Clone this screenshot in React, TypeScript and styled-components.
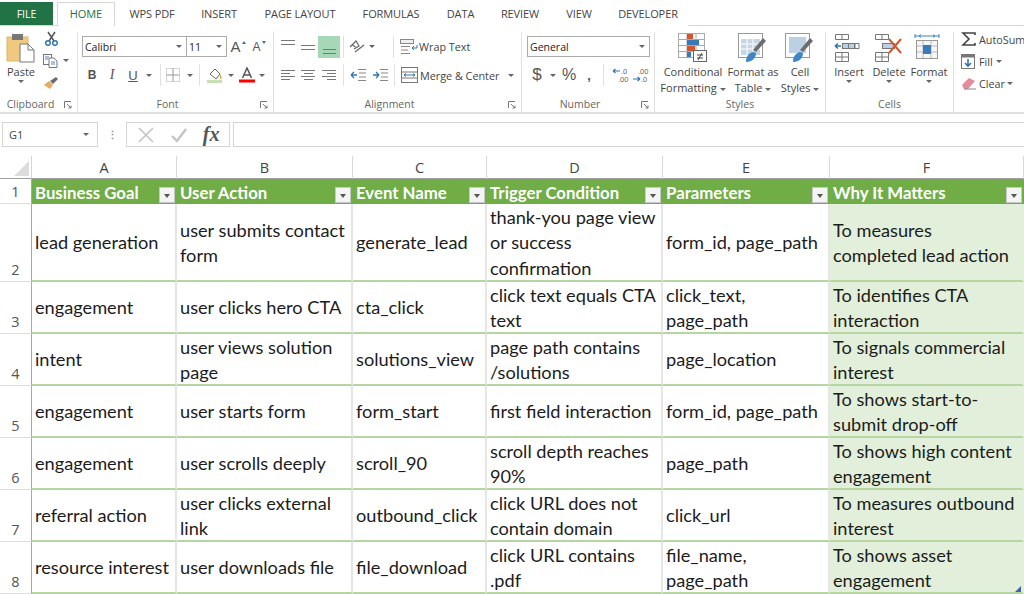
import React from "react";
import styled, { createGlobalStyle } from "styled-components";

const GlobalStyle = createGlobalStyle`
  html, body { margin: 0; padding: 0; background: #fff; }
  body { width: 1024px; height: 594px; overflow: hidden; font-family: "Open Sans", "Liberation Sans", sans-serif; }
`;

const Page = styled.div`
  width: 1024px;
  height: 594px;
  overflow: hidden;
  display: flex;
  flex-direction: column;
`;

/* tabs */
const TabBar = styled.div`
  height: 26px;
  box-sizing: border-box;
  padding-top: 2px;
  display: flex;
  align-items: flex-start;
  border-bottom: 1px solid #d6d6d6;
`;
const FileTab = styled.div`
  width: 53px;
  height: 23px;
  margin-right: 4px;
  background: #217346;
  color: #fff;
  font-size: 10.5px;
  display: flex;
  align-items: center;
  justify-content: center;
`;
const Tab = styled.div<{ $w: number; $active?: boolean }>`
  width: ${(p) => p.$w}px;
  box-sizing: border-box;
  font-size: 11px;
  letter-spacing: -0.1px;
  display: flex;
  align-items: center;
  justify-content: center;
  color: ${(p) => (p.$active ? "#217346" : "#444")};
  background: #fff;
  height: 24px;
  padding-bottom: 2px;
  border: 1px solid ${(p) => (p.$active ? "#d6d6d6" : "transparent")};
  border-bottom: none;
`;

/* ribbon */
const Ribbon = styled.div`
  height: 88px;
  box-sizing: border-box;
  display: flex;
  border-bottom: 2px solid #e1e1e1;
  padding-top: 6px;
`;
const Group = styled.div<{ $w: number }>`
  width: ${(p) => p.$w}px;
  flex: none;
  box-sizing: border-box;
  height: 80px;
  border-right: 1px solid #e1e1e1;
  display: flex;
  flex-direction: column;
`;
const GroupBody = styled.div`
  flex: 1;
  display: flex;
  min-height: 0;
`;
const GroupLabel = styled.div<{ $launcher?: boolean }>`
  height: 15px;
  position: relative;
  font-size: 10.5px;
  color: #666;
  text-align: center;
  line-height: 14px;
  padding-right: ${(p) => (p.$launcher ? 16 : 0)}px;
`;
const Launcher = styled.svg`
  position: absolute;
  right: 5px;
  top: 4px;
`;
const Stack = styled.div<{ $w?: number; $pad?: number; $top?: number }>`
  display: flex;
  flex-direction: column;
  ${(p) => (p.$w ? `width: ${p.$w}px;` : "")}
  ${(p) => (p.$pad ? `padding-left: ${p.$pad}px;` : "")}
  ${(p) => (p.$top ? `margin-top: ${p.$top}px;` : "")}
`;
const ToolRow = styled.div<{ $h?: number; $gap?: number }>`
  display: flex;
  align-items: center;
  height: ${(p) => p.$h ?? 28}px;
  gap: ${(p) => p.$gap ?? 0}px;
`;
const BigTool = styled.div<{ $w: number }>`
  width: ${(p) => p.$w}px;
  flex: none;
  display: flex;
  flex-direction: column;
  align-items: center;
  font-size: 11px;
  line-height: 16px;
  color: #444;
  white-space: nowrap;
  svg.big { height: 30px; margin: 1px 0; }
`;
const SmallIcon = styled.div<{ $w: number; $on?: boolean }>`
  width: ${(p) => p.$w}px;
  height: 22px;
  flex: none;
  display: flex;
  align-items: center;
  justify-content: center;
  background: ${(p) => (p.$on ? "#a6d8b8" : "transparent")};
`;
const Caret = styled.span<{ $ml?: number; $mr?: number }>`
  display: inline-block;
  flex: none;
  width: 0;
  height: 0;
  border-left: 3px solid transparent;
  border-right: 3px solid transparent;
  border-top: 3px solid #666;
  margin-left: ${(p) => p.$ml ?? 0}px;
  margin-right: ${(p) => p.$mr ?? 0}px;
  vertical-align: middle;
`;
const GrowMark = styled.span<{ $down?: boolean }>`
  display: inline-block;
  width: 0;
  height: 0;
  margin: -8px 0 0 1px;
  border-left: 2.5px solid transparent;
  border-right: 2.5px solid transparent;
  ${(p) => (p.$down ? "border-top: 3px solid #2f75b5;" : "border-bottom: 3px solid #2f75b5;")}
`;
const VSep = styled.div<{ $ml?: number; $mr?: number }>`
  width: 1px;
  height: 22px;
  background: #e1e1e1;
  flex: none;
  margin-left: ${(p) => p.$ml ?? 0}px;
  margin-right: ${(p) => p.$mr ?? 0}px;
`;
const Combo = styled.div<{ $w: number; $ml?: number }>`
  width: ${(p) => p.$w}px;
  margin-left: ${(p) => p.$ml ?? 0}px;
  height: 21px;
  box-sizing: border-box;
  border: 1px solid #ababab;
  display: flex;
  align-items: center;
  justify-content: space-between;
  padding: 0 4px 0 2px;
  font-size: 10.5px;
  color: #222;
  background: #fff;
`;
const ToolText = styled.span`
  font-size: 10.8px;
  color: #444;
  white-space: nowrap;
`;
const Glyph = styled.span<{ $size?: number; $serif?: boolean; $bold?: boolean; $italic?: boolean; $u?: boolean }>`
  font-family: ${(p) => (p.$serif ? '"Liberation Serif", serif' : '"Liberation Sans", sans-serif')};
  font-size: ${(p) => p.$size ?? 12}px;
  font-weight: ${(p) => (p.$bold ? 700 : 400)};
  font-style: ${(p) => (p.$italic ? "italic" : "normal")};
  text-decoration: ${(p) => (p.$u ? "underline" : "none")};
  color: #555;
`;

/* formula bar */
const FormulaBar = styled.div`
  height: 26px;
  margin-top: 8px;
  display: flex;
  align-items: stretch;
`;
const NameBox = styled.div`
  width: 96px;
  margin-left: 2px;
  box-sizing: border-box;
  border: 1px solid #d4d4d4;
  display: flex;
  align-items: center;
  justify-content: space-between;
  padding: 0 8px 0 6px;
  font-size: 11px;
  color: #444;
`;
const Grip = styled.div`
  width: 28px;
  display: flex;
  align-items: center;
  justify-content: center;
  color: #999;
  font-size: 11px;
  font-weight: 700;
`;
const FxBox = styled.div`
  width: 104px;
  box-sizing: border-box;
  border: 1px solid #d4d4d4;
  display: flex;
  align-items: center;
  justify-content: space-around;
  padding: 0 2px;
`;
const FormulaInput = styled.div`
  flex: 1;
  margin-left: 3px;
  box-sizing: border-box;
  border: 1px solid #d4d4d4;
  border-right: none;
`;

/* sheet */
const Sheet = styled.div`
  margin-top: 9px;
  display: grid;
  grid-template-columns: 32px 145px 176px 134px 176px 167px 194px;
  grid-template-rows: 23px 25px 78px repeat(6, 52px);
  font-family: Lato, Carlito, "Liberation Sans", sans-serif;
`;
const Corner = styled.div`
  border-right: 1px solid #d4d4d4;
  border-bottom: 1px solid #9f9f9f;
  position: relative;
  &::after {
    content: "";
    position: absolute;
    right: 2px;
    bottom: 2px;
    width: 0;
    height: 0;
    border-left: 15px solid transparent;
    border-bottom: 15px solid #dcdcdc;
  }
`;
const ColHead = styled.div`
  border-right: 1px solid #d9d9d9;
  border-bottom: 1px solid #9f9f9f;
  display: flex;
  align-items: center;
  justify-content: center;
  font-family: "Open Sans", sans-serif;
  font-size: 14.5px;
  color: #444;
`;
const RowHead = styled.div`
  border-right: 1px solid #a8a8a8;
  border-bottom: 1px solid #dedede;
  display: flex;
  align-items: flex-end;
  justify-content: center;
  padding-bottom: 2px;
  box-sizing: border-box;
  font-family: "Open Sans", sans-serif;
  font-size: 14.5px;
  line-height: 19px;
  color: #555;
`;
const HeadCell = styled.div`
  background: #70ad47;
  color: #fff;
  font-weight: 700;
  font-size: 16.8px;
  padding: 1px 0 0 3px;
  display: flex;
  align-items: center;
  justify-content: space-between;
  white-space: nowrap;
  overflow: hidden;
`;
const FilterButton = styled.div`
  width: 16px;
  height: 16px;
  flex: none;
  margin: 5px 2px 0 0;
  background: #f4f4f4;
  border: 1px solid #c8c8c8;
  box-sizing: border-box;
  display: flex;
  align-items: center;
  justify-content: center;
  &::after {
    content: "";
    border-left: 3.5px solid transparent;
    border-right: 3.5px solid transparent;
    border-top: 4px solid #555;
    margin-top: 2px;
  }
`;
const Cell = styled.div<{ $accent?: boolean }>`
  box-sizing: border-box;
  padding: 2px 3px 0;
  font-size: 18.2px;
  line-height: 25.5px;
  color: #1c1c1c;
  display: flex;
  align-items: center;
  border-right: 2px solid ${(p) => (p.$accent ? "transparent" : "#e6e6e6")};
  border-bottom: 2px solid #b5d6a0;
  background: ${(p) => (p.$accent ? "#e2efda" : "#fff")};
  position: relative;
  white-space: pre;
  overflow: hidden;
`;
const ResizeHandle = styled.div`
  position: absolute;
  right: 1px;
  bottom: 0;
  width: 0;
  height: 0;
  border-left: 6px solid transparent;
  border-bottom: 6px solid #3f5fa8;
`;

/* drawn icons */
const LauncherIcon = () => (
  <Launcher width="8" height="8" viewBox="0 0 8 8">
    <path d="M.5 7V.5H7M3 3l4 4M4.5 7H7V4.5" fill="none" stroke="#777" />
  </Launcher>
);
const PasteIcon = () => (
  <svg className="big" width="30" height="30" viewBox="0 0 30 30">
    <rect x="1" y="4" width="21" height="24" fill="#f0c981" stroke="#e0b568" />
    <rect x="6" y="1" width="11" height="6" fill="#777" />
    <path d="M14 11h8l6 6v12H14z" fill="#fff" stroke="#777" />
    <path d="M22 11v6h6" fill="none" stroke="#777" />
  </svg>
);
const Scissors = () => (
  <svg width="15" height="15" viewBox="0 0 15 15">
    <path d="M4 1l6 9M11 1L5 10" stroke="#555" strokeWidth="1.5" />
    <circle cx="4" cy="12" r="2.3" fill="none" stroke="#2f75b5" strokeWidth="1.5" />
    <circle cx="11" cy="12" r="2.3" fill="none" stroke="#2f75b5" strokeWidth="1.5" />
  </svg>
);
const CopyIcon = () => (
  <svg width="15" height="14" viewBox="0 0 15 14">
    <rect x=".5" y=".5" width="8" height="10" fill="#fff" stroke="#777" />
    <path d="M6 4h5l3 3v6.5H6z" fill="#fff" stroke="#777" />
    <path d="M2 3h4M2 5h3M8 8h4M8 10h4" stroke="#4a86c8" />
  </svg>
);
const PainterIcon = () => (
  <svg width="16" height="14" viewBox="0 0 16 14">
    <path d="M1 9l5-4 4 4-3 4z" fill="#e3ad5a" />
    <path d="M7 5l6-4 2 2-5 5z" fill="#6a6a6a" />
  </svg>
);
const Lines = ({ rows, w = 15 }: { rows: [number, number, number][]; w?: number }) => (
  <svg width={w} height="14" viewBox={`0 0 ${w} 14`}>
    {rows.map(([x, y, len], i) => (
      <rect key={i} x={x} y={y} width={len} height="1" fill="#777" />
    ))}
  </svg>
);
const BordersIcon = () => (
  <svg width="14" height="14" viewBox="0 0 14 14">
    <path d="M.5.5h13v13H.5z" fill="none" stroke="#aaa" strokeDasharray="1 1" />
    <path d="M.5 7h13M7 .5v13" stroke="#999" />
  </svg>
);
const FillIcon = () => (
  <svg width="16" height="15" viewBox="0 0 16 15">
    <path d="M3 6l5-5 5 5-4 5z" fill="#fff" stroke="#666" />
    <path d="M13 6c1 2 2 3 1.6 4.4-.6.7-1.5.3-1.6-.6z" fill="#e0a030" />
    <rect x="0" y="12" width="15" height="3" fill="#c6e0b4" />
  </svg>
);
const FontColorIcon = () => (
  <svg width="16" height="16" viewBox="0 0 16 16">
    <path d="M3.5 11L8 1l4.5 10M5 8h6" fill="none" stroke="#555" strokeWidth="1.5" />
    <rect x="0" y="12.5" width="16" height="3" fill="#ff0000" />
  </svg>
);
const OrientIcon = () => (
  <svg width="17" height="15" viewBox="0 0 17 15">
    <path d="M1 8l6-6 3 5-5 3M3.5 6l3 2" fill="none" stroke="#666" strokeWidth="1.2" />
    <path d="M6 13l9-7" stroke="#666" strokeWidth="1.2" />
  </svg>
);
const IndentIcon = ({ inward }: { inward?: boolean }) => (
  <svg width="16" height="12" viewBox="0 0 16 12">
    <path
      d={inward ? "M1 6h6M7 6L4 3M7 6L4 9" : "M1 6h6M1 6l3-3M1 6l3 3"}
      fill="none"
      stroke="#2f75b5"
      strokeWidth="1.3"
    />
    <path d="M8 .5h8M9 4h7M9 8h7M8 11.5h8" stroke="#888" />
  </svg>
);
const WrapIcon = () => (
  <svg width="18" height="16" viewBox="0 0 18 16">
    <rect x=".5" y=".5" width="13" height="4" fill="#eee" stroke="#888" />
    <path d="M1 7.5h9M1 11h7M1 14.5h9" stroke="#888" />
    <path d="M17 6v3h-5M14 7l-2 2 2 2" fill="none" stroke="#2f75b5" />
  </svg>
);
const MergeIcon = () => (
  <svg width="18" height="16" viewBox="0 0 18 16">
    <rect x=".5" y=".5" width="16" height="15" fill="none" stroke="#777" />
    <path d="M.5 5h16M.5 11h16" stroke="#777" />
    <path d="M3 8h11M3 8l2-1.5M3 8l2 1.5M14 8l-2-1.5M14 8l-2 1.5" stroke="#2f75b5" fill="none" />
  </svg>
);
const DecimalIcon = ({ more }: { more?: boolean }) => (
  <svg width="17" height="16" viewBox="0 0 17 16" fontFamily="Liberation Sans, sans-serif" fontSize="7.5" fill="#666">
    {more ? (
      <>
        <text x="6" y="6.5">.00</text>
        <text x="9" y="14.5">.0</text>
        <path d="M1 12h7M8 12l-2.5-2M8 12l-2.5 2" stroke="#2f75b5" strokeWidth="1.2" fill="none" />
      </>
    ) : (
      <>
        <text x="9" y="6.5">.0</text>
        <text x="6" y="14.5">.00</text>
        <path d="M8 4H1M1 4l2.5-2M1 4l2.5 2" stroke="#2f75b5" strokeWidth="1.2" fill="none" />
      </>
    )}
  </svg>
);
const ConditionalIcon = () => (
  <svg className="big" width="30" height="30" viewBox="0 0 30 30">
    <rect x=".5" y=".5" width="26" height="24" fill="#fff" stroke="#aaa" />
    <path d="M9 .5v24M18 .5v24M.5 6.5h26M.5 12.5h26M.5 18.5h26" stroke="#aaa" />
    <rect x="9" y="1" width="6" height="5" fill="#d2572c" />
    <rect x="9" y="7" width="12" height="5" fill="#3a78b8" />
    <rect x="9" y="13" width="8" height="5" fill="#d2572c" />
    <rect x="9" y="19" width="4" height="5" fill="#3a78b8" />
    <rect x="15.5" y="17.5" width="13" height="11" fill="#fff" stroke="#666" />
    <path d="M19 22h6M19 25h6M24 20l-4 7" stroke="#444" />
  </svg>
);
const TableBrushIcon = ({ styles }: { styles?: boolean }) => (
  <svg className="big" width="30" height="30" viewBox="0 0 30 30">
    <rect x=".5" y=".5" width="24" height="24" fill="#fff" stroke="#999" />
    {styles ? (
      <rect x="4" y="4" width="17" height="16" fill="#bcd0e4" />
    ) : (
      <>
        <rect x="3" y="6" width="19" height="16" fill="#c6d6e6" />
        <path d="M3 11h19M3 16h19M9 6v16M15 6v16" stroke="#fff" />
      </>
    )}
    <path d="M15 17l10-12 3 3-10 11z" fill="#6d6d6d" />
    <path d="M8 29c0-6 3-9 7-10l3 1c0 5-4 9-10 9z" fill="#3d85c6" />
  </svg>
);
const CellsIcon = ({ kind }: { kind: "insert" | "delete" | "format" }) => {
  if (kind === "format") {
    return (
      <svg className="big" width="30" height="30" viewBox="0 0 30 30">
        <path d="M1 3h24M1 1v4M25 1v4M5 3l2-1.5M5 3l2 1.5M21 3l-2-1.5M21 3l-2 1.5" fill="none" stroke="#3d85c6" />
        <rect x="2.5" y="7.5" width="21" height="18" fill="#f6f6f6" stroke="#999" />
        <path d="M9 8v17M17 8v17M3 13h20M3 19h20" stroke="#bbb" />
        <rect x="9" y="12" width="8" height="9" fill="#3d78b8" />
      </svg>
    );
  }
  return (
    <svg className="big" width="30" height="30" viewBox="0 0 30 30">
      <path d="M1.5 1.5h13v5h-13zM8 1.5v5M1.5 19.5h13v9h-13zM8 19.5v9M1.5 24h13" fill="#fff" stroke="#777" />
      <rect x="8.5" y="10.5" width="12" height="5" fill="#bcd0e4" stroke="#777" />
      {kind === "insert" ? (
        <>
          <path d="M14.5 10.5v5M21 10.5h4v5h-4z" fill="none" stroke="#777" />
          <path d="M1 13h6M1 13l3-2.5M1 13l3 2.5" fill="none" stroke="#2f75b5" strokeWidth="1.5" />
        </>
      ) : (
        <path d="M15 6l12 14M27 6L15 20" stroke="#d2572c" strokeWidth="2" />
      )}
    </svg>
  );
};
const SigmaIcon = () => (
  <svg width="16" height="14" viewBox="0 0 16 14">
    <path d="M14 3V1H2l6 6-6 6h12v-2" fill="none" stroke="#444" strokeWidth="1.6" />
  </svg>
);
const FillDownIcon = () => (
  <svg width="15" height="15" viewBox="0 0 15 15">
    <rect x=".5" y=".5" width="13" height="14" fill="#fff" stroke="#777" />
    <rect x=".5" y=".5" width="13" height="3" fill="#777" />
    <path d="M7 5v7M4 9l3 3 3-3" fill="none" stroke="#2f75b5" strokeWidth="1.6" />
  </svg>
);
const EraserIcon = () => (
  <svg width="16" height="13" viewBox="0 0 16 13">
    <path d="M1 8l7-7 6 3-7 8H3z" fill="#e88a9a" />
    <path d="M3 12h12" stroke="#888" />
  </svg>
);
const CancelIcon = () => (
  <svg width="18" height="16" viewBox="0 0 18 16">
    <path d="M2 1l14 14M16 1L2 15" stroke="#c4c4c4" strokeWidth="1.6" />
  </svg>
);
const EnterIcon = () => (
  <svg width="18" height="16" viewBox="0 0 18 16">
    <path d="M2 9l5 5L16 2" fill="none" stroke="#c4c4c4" strokeWidth="2.4" />
  </svg>
);

const columns = ["A", "B", "C", "D", "E", "F"];
const headers = ["Business Goal", "User Action", "Event Name", "Trigger Condition", "Parameters", "Why It Matters"];
const rows: string[][] = [
  ["lead generation", "user submits contact\nform", "generate_lead", "thank-you page view\nor success\nconfirmation", "form_id, page_path", "To measures\ncompleted lead action"],
  ["engagement", "user clicks hero CTA", "cta_click", "click text equals CTA\ntext", "click_text,\npage_path", "To identifies CTA\ninteraction"],
  ["intent", "user views solution\npage", "solutions_view", "page path contains\n/solutions", "page_location", "To signals commercial\ninterest"],
  ["engagement", "user starts form", "form_start", "first field interaction", "form_id, page_path", "To shows start-to-\nsubmit drop-off"],
  ["engagement", "user scrolls deeply", "scroll_90", "scroll depth reaches\n90%", "page_path", "To shows high content\nengagement"],
  ["referral action", "user clicks external\nlink", "outbound_click", "click URL does not\ncontain domain", "click_url", "To measures outbound\ninterest"],
  ["resource interest", "user downloads file", "file_download", "click URL contains\n.pdf", "file_name,\npage_path", "To shows asset\nengagement"],
];

export default function App() {
  return (
    <Page>
      <GlobalStyle />
      <TabBar>
        <FileTab>FILE</FileTab>
        <Tab $w={58} $active>HOME</Tab>
        <Tab $w={74}>WPS PDF</Tab>
        <Tab $w={60}>INSERT</Tab>
        <Tab $w={102}>PAGE LAYOUT</Tab>
        <Tab $w={80}>FORMULAS</Tab>
        <Tab $w={59}>DATA</Tab>
        <Tab $w={60}>REVIEW</Tab>
        <Tab $w={58}>VIEW</Tab>
        <Tab $w={80}>DEVELOPER</Tab>
      </TabBar>

      <Ribbon>
        <Group $w={78}>
          <GroupBody>
            <BigTool $w={42}>
              <PasteIcon />
              <span>Paste</span>
              <Caret />
            </BigTool>
            <Stack $top={-5}>
              <ToolRow $h={22}><SmallIcon $w={18}><Scissors /></SmallIcon></ToolRow>
              <ToolRow $h={23}><SmallIcon $w={16}><CopyIcon /></SmallIcon><Caret $ml={5} /></ToolRow>
              <ToolRow $h={22}><SmallIcon $w={18}><PainterIcon /></SmallIcon></ToolRow>
            </Stack>
          </GroupBody>
          <GroupLabel $launcher>Clipboard<LauncherIcon /></GroupLabel>
        </Group>

        <Group $w={196}>
          <GroupBody>
            <Stack $pad={4}>
              <ToolRow $h={29}>
                <Combo $w={105}>Calibri<Caret /></Combo>
                <Combo $w={41} $ml={-1}>11<Caret /></Combo>
                <SmallIcon $w={22}><Glyph $size={15}>A</Glyph><GrowMark /></SmallIcon>
                <SmallIcon $w={20}><Glyph $size={12}>A</Glyph><GrowMark $down /></SmallIcon>
              </ToolRow>
              <ToolRow>
                <SmallIcon $w={20}><Glyph $bold>B</Glyph></SmallIcon>
                <SmallIcon $w={20}><Glyph $serif $italic $size={14}>I</Glyph></SmallIcon>
                <SmallIcon $w={22}><Glyph $u $size={13}>U</Glyph></SmallIcon>
                <Caret $ml={2} $mr={8} />
                <VSep />
                <SmallIcon $w={24}><BordersIcon /></SmallIcon>
                <Caret $ml={2} $mr={6} />
                <VSep />
                <SmallIcon $w={30}><FillIcon /></SmallIcon>
                <Caret $ml={-2} $mr={3} />
                <SmallIcon $w={20}><FontColorIcon /></SmallIcon>
                <Caret $ml={2} />
              </ToolRow>
            </Stack>
          </GroupBody>
          <GroupLabel $launcher>Font<LauncherIcon /></GroupLabel>
        </Group>

        <Group $w={248}>
          <GroupBody>
            <Stack $pad={4}>
              <ToolRow $h={29}>
                <SmallIcon $w={20}><Lines rows={[[0, 0, 14], [0, 4, 14]]} /></SmallIcon>
                <SmallIcon $w={20}><Lines rows={[[0, 5, 14], [0, 9, 14]]} /></SmallIcon>
                <SmallIcon $w={22} $on><Lines rows={[[1, 9, 13], [1, 13, 13]]} /></SmallIcon>
                <VSep $ml={3} $mr={3} />
                <SmallIcon $w={20}><OrientIcon /></SmallIcon>
                <Caret $ml={2} $mr={18} />
                <VSep $mr={5} />
                <SmallIcon $w={20}><WrapIcon /></SmallIcon>
                <ToolText>Wrap Text</ToolText>
              </ToolRow>
              <ToolRow>
                <SmallIcon $w={20}><Lines rows={[[0, 2, 14], [0, 5, 9], [0, 8, 14], [0, 11, 9]]} /></SmallIcon>
                <SmallIcon $w={20}><Lines rows={[[0, 2, 14], [3, 5, 9], [0, 8, 14], [3, 11, 9]]} /></SmallIcon>
                <SmallIcon $w={22}><Lines rows={[[0, 2, 14], [5, 5, 9], [0, 8, 14], [5, 11, 9]]} /></SmallIcon>
                <VSep $ml={3} $mr={3} />
                <SmallIcon $w={22}><IndentIcon /></SmallIcon>
                <SmallIcon $w={22}><IndentIcon inward /></SmallIcon>
                <VSep $ml={3} $mr={5} />
                <SmallIcon $w={20}><MergeIcon /></SmallIcon>
                <ToolText>Merge &amp; Center</ToolText>
                <Caret $ml={9} />
              </ToolRow>
            </Stack>
          </GroupBody>
          <GroupLabel $launcher>Alignment<LauncherIcon /></GroupLabel>
        </Group>

        <Group $w={133}>
          <GroupBody>
            <Stack $pad={5}>
              <ToolRow $h={29}><Combo $w={123}>General<Caret /></Combo></ToolRow>
              <ToolRow>
                <SmallIcon $w={20}><Glyph $size={17}>$</Glyph></SmallIcon>
                <Caret $ml={3} $mr={2} />
                <SmallIcon $w={22}><Glyph $size={16}>%</Glyph></SmallIcon>
                <SmallIcon $w={18}><Glyph $bold $size={13}>,</Glyph></SmallIcon>
                <VSep $ml={5} $mr={6} />
                <SmallIcon $w={20}><DecimalIcon /></SmallIcon>
                <SmallIcon $w={20}><DecimalIcon more /></SmallIcon>
              </ToolRow>
            </Stack>
          </GroupBody>
          <GroupLabel $launcher>Number<LauncherIcon /></GroupLabel>
        </Group>

        <Group $w={171}>
          <GroupBody>
            <BigTool $w={76}>
              <ConditionalIcon />
              <span>Conditional</span>
              <span>Formatting <Caret /></span>
            </BigTool>
            <BigTool $w={44}>
              <TableBrushIcon />
              <span>Format as</span>
              <span>Table <Caret /></span>
            </BigTool>
            <BigTool $w={50}>
              <TableBrushIcon styles />
              <span>Cell</span>
              <span>Styles <Caret /></span>
            </BigTool>
          </GroupBody>
          <GroupLabel>Styles</GroupLabel>
        </Group>

        <Group $w={128}>
          <GroupBody>
            <BigTool $w={46}>
              <CellsIcon kind="insert" />
              <span>Insert</span>
              <Caret />
            </BigTool>
            <BigTool $w={34}>
              <CellsIcon kind="delete" />
              <span>Delete</span>
              <Caret />
            </BigTool>
            <BigTool $w={46}>
              <CellsIcon kind="format" />
              <span>Format</span>
              <Caret />
            </BigTool>
          </GroupBody>
          <GroupLabel>Cells</GroupLabel>
        </Group>

        <Stack $pad={7} $top={-4}>
          <ToolRow $h={22} $gap={2}><SigmaIcon /><ToolText>AutoSum</ToolText></ToolRow>
          <ToolRow $h={22} $gap={3}><FillDownIcon /><ToolText>Fill</ToolText><Caret /></ToolRow>
          <ToolRow $h={22} $gap={2}><EraserIcon /><ToolText>Clear</ToolText><Caret /></ToolRow>
        </Stack>
      </Ribbon>

      <FormulaBar>
        <NameBox>G1<Caret /></NameBox>
        <Grip>⋮</Grip>
        <FxBox>
          <CancelIcon />
          <EnterIcon />
          <Glyph $serif $italic $bold $size={20}>fx</Glyph>
        </FxBox>
        <FormulaInput />
      </FormulaBar>

      <Sheet>
        <Corner />
        {columns.map((c) => <ColHead key={c}>{c}</ColHead>)}
        <RowHead>1</RowHead>
        {headers.map((h) => (
          <HeadCell key={h}>{h}<FilterButton /></HeadCell>
        ))}
        {rows.map((row, i) => (
          <React.Fragment key={i}>
            <RowHead>{i + 2}</RowHead>
            {row.map((text, j) => (
              <Cell key={j} $accent={j === 5}>
                <span>{text}</span>
                {j === 5 && i === rows.length - 1 && <ResizeHandle />}
              </Cell>
            ))}
          </React.Fragment>
        ))}
      </Sheet>
    </Page>
  );
}
